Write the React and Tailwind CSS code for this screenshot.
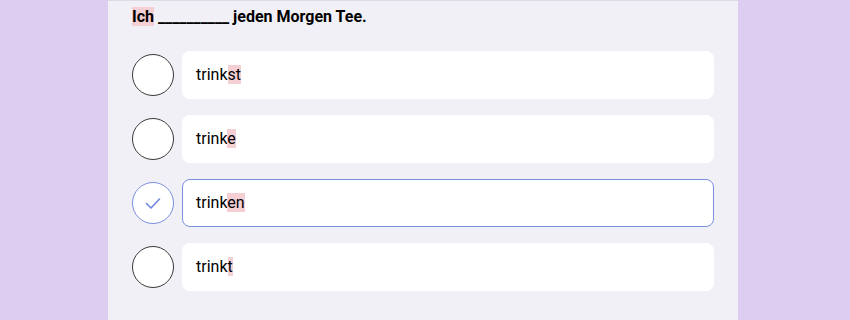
const options = [
  { stem: "trink", end: "st" },
  { stem: "trink", end: "e" },
  { stem: "trink", end: "en", selected: true },
  { stem: "trink", end: "t" },
];

function Option({ stem, end, selected }) {
  return (
    <div className="flex items-center gap-[8px]">
      <div
        className={
          selected
            ? "flex h-[42px] w-[42px] shrink-0 items-center justify-center rounded-full border border-[#7b8fe0] bg-white"
            : "h-[42px] w-[42px] shrink-0 rounded-full border border-[#3a3a3a] bg-white"
        }
      >
        {selected && (
          <svg width="20" height="20" viewBox="0 0 20 20" fill="none">
            <path d="M3.5 10.5 L8 15 L16.5 6" stroke="#6f84dc" strokeWidth="1.6" strokeLinecap="round" strokeLinejoin="round" />
          </svg>
        )}
      </div>
      <div
        className={
          selected
            ? "flex h-[48px] flex-1 items-center rounded-lg border border-[#7b8fe0] bg-white pl-[13px]"
            : "flex h-[48px] flex-1 items-center rounded-lg bg-white pl-[14px]"
        }
      >
        <span className="text-[16px] text-black">
          {stem}
          <span className="bg-[#f4cfd3]">{end}</span>
        </span>
      </div>
    </div>
  );
}

export default function App() {
  return (
    <div className="flex h-[320px] w-[850px] justify-center bg-[#dccdf1] font-['Roboto',sans-serif]">
      <div className="ml-[-4px] w-[630px] border-t border-[#dcdbe3] bg-[#f1f0f6] pl-[24px] pr-[24px]">
        <p className="mt-[4px] text-[16px] font-bold leading-[24px] text-black">
          <span className="bg-[#f4cfd3]">Ich</span> __________ jeden Morgen Tee.
        </p>
        <div className="mt-[22px] flex flex-col gap-[16px]">
          {options.map((o, i) => (
            <Option key={i} {...o} />
          ))}
        </div>
      </div>
    </div>
  );
}
